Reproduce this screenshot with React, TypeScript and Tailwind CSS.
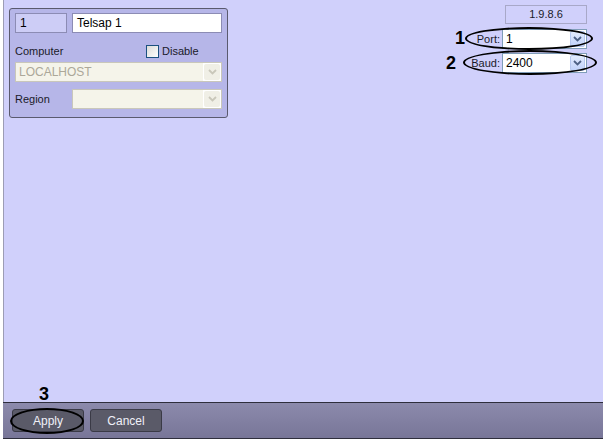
import React from "react";

const Chevron = ({ color }: { color: string }) => (
  <svg width="9" height="6" viewBox="0 0 9 6">
    <polyline points="1,1 4.5,4.5 8,1" fill="none" stroke={color} strokeWidth="1.8" />
  </svg>
);

// XP-style blue combo (enabled)
const Combo = ({ value }: { value: string }) => (
  <div className="flex h-[20px] w-[85px] items-stretch border border-[#7f9db9] bg-white">
    <div className="flex flex-1 items-center pl-[3px] text-[12px] text-black">{value}</div>
    <div className="m-[1px] flex w-[15px] items-center justify-center rounded-[2px] border border-[#b6c8ef] bg-gradient-to-b from-[#e3ebfd] to-[#c1d3fb]">
      <Chevron color="#4d6185" />
    </div>
  </div>
);

// disabled grey combo
const DisabledCombo = ({ value, className }: { value?: string; className: string }) => (
  <div className={`flex h-[20px] items-stretch border border-[#c9c7ba] bg-white ${className}`}>
    <div className="flex flex-1 items-center bg-[#f5f4ea] pl-[3px] text-[12px] text-[#aca899]">{value}</div>
    <div className="m-[1px] flex w-[16px] items-center justify-center rounded-[2px] bg-[#f0efe6]">
      <Chevron color="#c9c7ba" />
    </div>
  </div>
);

export default function App() {
  return (
    <div
      className="relative flex h-[442px] w-[606px] flex-col bg-white px-[3px] pb-[3px] text-[11px] text-black"
      style={{ fontFamily: '"Liberation Sans", Arial, sans-serif' }}
    >
      {/* Main panel */}
      <div className="flex flex-1 justify-between border-l border-[#9c9cb4] bg-[#d0d0fb] pl-[5px] pr-[16px] pt-[5px]">
        {/* Group box */}
        <div className="mt-[3px] flex h-[110px] w-[219px] flex-col rounded-[3px] border border-[#5a5a6e] bg-[#b6b6e8] px-[5px] pt-[4px]">
          <div className="flex gap-[5px]">
            <div className="flex h-[20px] w-[52px] items-center border border-[#8c8cb4] bg-[#cdcdf6] pl-[4px] text-[12px]">1</div>
            <div className="flex h-[20px] w-[150px] items-center border border-[#8c8cb4] bg-white pl-[4px] text-[12px]">Telsap 1</div>
          </div>
          <div className="mt-[10px] flex h-[16px] items-center">
            <span className="w-[131px] text-[11px] text-[#1a1a2a]">Computer</span>
            <div className="h-[13px] w-[13px] border border-[#1c5180] bg-gradient-to-br from-[#dcdcd8] to-white" />
            <span className="ml-[3px] text-[11px] text-[#1a1a2a]">Disable</span>
          </div>
          <DisabledCombo value="LOCALHOST" className="mt-[3px] w-[207px]" />
          <div className="mt-[7px] flex items-center">
            <span className="w-[57px] text-[11px] text-[#1a1a2a]">Region</span>
            <DisabledCombo className="w-[150px]" />
          </div>
        </div>

        {/* Right column */}
        <div className="flex flex-col items-end">
          <div className="flex h-[19px] w-[82px] items-center justify-center border border-[#a8a8c8] text-[11px] text-[#1a1a2a]">
            1.9.8.6
          </div>
          <div className="mt-[5px] flex items-center gap-[2px]">
            <span className="text-[11px] text-[#1a1a2a]">Port:</span>
            <Combo value="1" />
          </div>
          <div className="mt-[4px] flex items-center gap-[2px]">
            <span className="text-[11px] text-[#1a1a2a]">Baud:</span>
            <Combo value="2400" />
          </div>
        </div>
      </div>

      {/* Bottom bar */}
      <div className="flex h-[37px] items-center gap-[6px] border-y border-[#2e2e3c] bg-gradient-to-b from-[#8c8aac] to-[#787698] pl-[9px]">
        <button className="h-[23px] w-[72px] rounded-[3px] border border-[#3a3a46] bg-[#5a5a68] text-[12px] text-[#f0f0f8]">
          Apply
        </button>
        <button className="h-[23px] w-[72px] rounded-[3px] border border-[#3a3a46] bg-[#5a5a68] text-[12px] text-[#f0f0f8]">
          Cancel
        </button>
      </div>

      {/* Annotations */}
      <div className="absolute left-[465px] top-[27px] h-[23px] w-[128px] rounded-[50%] border-[2.5px] border-black" />
      <div className="absolute left-[463px] top-[50px] h-[25px] w-[134px] rounded-[50%] border-[2.5px] border-black" />
      <div className="absolute left-[10px] top-[408px] h-[26px] w-[74px] rounded-[50%] border-[2.5px] border-black" />
      <span className="absolute left-[455px] top-[27px] text-[18px] font-bold leading-[22px]">1</span>
      <span className="absolute left-[446px] top-[52px] text-[18px] font-bold leading-[22px]">2</span>
      <span className="absolute left-[39px] top-[383px] text-[18px] font-bold leading-[22px]">3</span>
    </div>
  );
}
